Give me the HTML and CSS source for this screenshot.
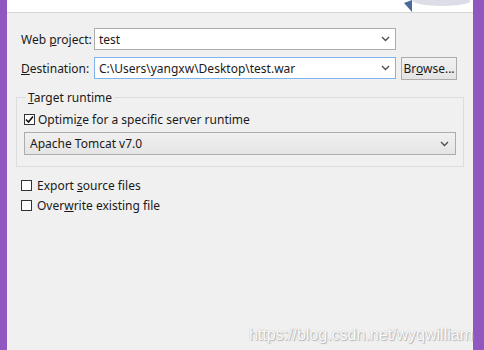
FILE: index.html
```html
<!DOCTYPE html>
<html lang="en">
<head>
    <meta charset="UTF-8">
    <title>Export WAR</title>
    <link rel="stylesheet" href="styles.css">
</head>
<body>
    <div class="window">
        <div class="banner">
            <svg class="banner-art" width="70" height="12" viewBox="0 0 70 12">
                <ellipse cx="42" cy="0" rx="30" ry="6" fill="#dcdde6"/>
                <path d="M4 3 L12 0 L12 12 Z" fill="#4a6a9a"/>
            </svg>
        </div>
        <div class="content">
            <div class="row">
                <span class="label">Web <u>p</u>roject:</span>
                <div class="combo">
                    <span>test</span>
                    <svg class="chev" width="9" height="6" viewBox="0 0 9 6"><path d="M1 1 L4.5 4.5 L8 1" fill="none" stroke="#505050" stroke-width="1.4"/></svg>
                </div>
            </div>
            <div class="row">
                <span class="label"><u>D</u>estination:</span>
                <div class="combo focus">
                    <span>C:\Users\yangxw\Desktop\test.war</span>
                    <svg class="chev" width="9" height="6" viewBox="0 0 9 6"><path d="M1 1 L4.5 4.5 L8 1" fill="none" stroke="#505050" stroke-width="1.4"/></svg>
                </div>
                <button class="btn">Br<u>o</u>wse...</button>
            </div>

            <fieldset class="group">
                <legend><u>T</u>arget runtime</legend>
                <div class="check">
                    <span class="box checked">
                        <svg width="9" height="9" viewBox="0 0 9 9"><path d="M1 4.5 L3.5 7 L8 1.5" fill="none" stroke="#111" stroke-width="1.6"/></svg>
                    </span>
                    <span>Optimi<u>z</u>e for a specific server runtime</span>
                </div>
                <div class="select">
                    <span>Apache Tomcat v7.0</span>
                    <svg class="chev" width="9" height="6" viewBox="0 0 9 6"><path d="M1 1 L4.5 4.5 L8 1" fill="none" stroke="#505050" stroke-width="1.4"/></svg>
                </div>
            </fieldset>

            <div class="options">
                <div class="check">
                    <span class="box"></span>
                    <span>Export <u>s</u>ource files</span>
                </div>
                <div class="check">
                    <span class="box"></span>
                    <span>Over<u>w</u>rite existing file</span>
                </div>
            </div>

            <div class="watermark">https://blog.csdn.net/wyqwilliam</div>
        </div>
    </div>
</body>
</html>
```

FILE: styles.css
```css
html, body {
    margin: 0;
    padding: 0;
    height: 100%;
}
body {
    font-family: "Noto Sans", "Noto Sans CJK SC", sans-serif;
    font-size: 12px;
    color: #1a1a1a;
    background: #9157c1;
}
.window {
    height: 350px;
    margin: 0 11px 0 7px;
    background: #f0f0f0;
    display: flex;
    flex-direction: column;
}
.banner {
    height: 12px;
    background: #fff;
    border-bottom: 1px solid #d4d4d4;
    display: flex;
    justify-content: flex-end;
    overflow: hidden;
}
.banner-art {
    margin-right: 3px;
}
.content {
    position: relative;
    flex: 1;
    padding: 15px 0 0 14px;
}
.row {
    display: flex;
    align-items: center;
    height: 22px;
    margin-bottom: 7px;
}
.label {
    width: 73px;
    white-space: nowrap;
}
u {
    text-decoration: underline;
    text-underline-offset: 1px;
}
.combo {
    box-sizing: border-box;
    width: 302px;
    height: 22px;
    background: #fff;
    border: 1px solid #acacac;
    display: flex;
    align-items: center;
    justify-content: space-between;
    padding: 0 5px 0 4px;
}
.combo.focus {
    border-color: #7eb4ea;
}
.chev {
    flex: none;
}
.btn {
    box-sizing: border-box;
    margin-left: 5px;
    width: 56px;
    height: 23px;
    font: inherit;
    color: inherit;
    background: linear-gradient(#f2f2f2, #e3e3e3);
    border: 1px solid #adadad;
    padding: 0;
}
.group {
    box-sizing: border-box;
    width: 447px;
    margin: 10px 0 0 -5px;
    padding: 4px 7px 11px 7px;
    border: 1px solid #dcdcdc;
}
.group legend {
    padding: 0 2px;
    margin-left: 2px;
}
.check {
    display: flex;
    align-items: center;
    gap: 3px;
    height: 18px;
}
.box {
    box-sizing: border-box;
    width: 11px;
    height: 11px;
    border: 1px solid #333;
    background: #fff;
    display: flex;
    align-items: center;
    justify-content: center;
}
.select {
    box-sizing: border-box;
    margin-top: 4px;
    height: 23px;
    width: 432px;
    background: linear-gradient(#f0f0f0, #e5e5e5);
    border: 1px solid #acacac;
    display: flex;
    align-items: center;
    justify-content: space-between;
    padding: 0 6px 0 5px;
}
.options {
    margin: 9px 0 0 0;
    display: flex;
    flex-direction: column;
    gap: 2px;
}
.options .check {
    gap: 5px;
}
.watermark {
    position: absolute;
    right: 0;
    bottom: 6px;
    font-family: "Liberation Sans", sans-serif;
    font-size: 16px;
    color: #fcfcfc;
    text-shadow: 1px 1px 1px #b4b4b4, 0 0 1px #a8a8a8;
}
```
